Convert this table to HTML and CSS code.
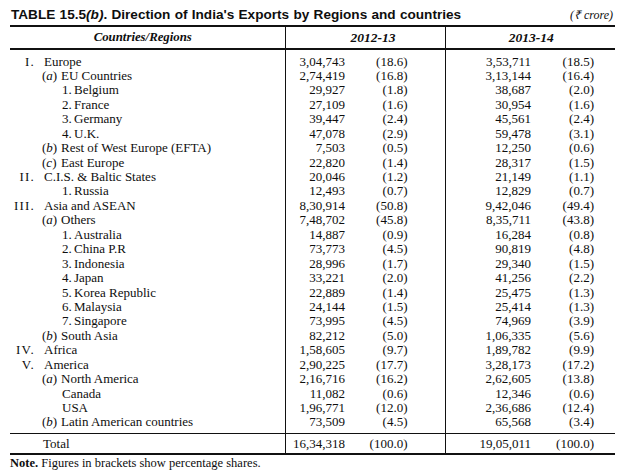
FILE: index.html
```html
<!DOCTYPE html>
<html>
<head>
<meta charset="utf-8">
<link rel="stylesheet" href="styles.css">
</head>
<body>
<div class="page">
  <div class="title-row">
    <h1 class="title">TABLE 15.5<i>(b)</i>. Direction of India's Exports by Regions and countries</h1>
    <span class="unit">(₹ crore)</span>
  </div>
  <table class="data">
    <colgroup>
      <col class="c-lbl"><col class="c-2a"><col class="c-2b"><col class="c-3a"><col class="c-3b">
    </colgroup>
    <thead>
      <tr>
        <th class="h-lbl">Countries/Regions</th>
        <th class="h-y1" colspan="2">2012-13</th>
        <th class="h-y2" colspan="2">2013-14</th>
      </tr>
    </thead>
    <tbody>
      <tr class="first"><td class="lbl l0"><span class="ix">I.</span>Europe</td><td class="n">3,04,743</td><td class="p">(18.6)</td><td class="n">3,53,711</td><td class="p">(18.5)</td></tr>
      <tr><td class="lbl l1"><span class="ix">(<i>a</i>)</span>EU Countries</td><td class="n">2,74,419</td><td class="p">(16.8)</td><td class="n">3,13,144</td><td class="p">(16.4)</td></tr>
      <tr><td class="lbl l2"><span class="ix">1.</span>Belgium</td><td class="n">29,927</td><td class="p">(1.8)</td><td class="n">38,687</td><td class="p">(2.0)</td></tr>
      <tr><td class="lbl l2"><span class="ix">2.</span>France</td><td class="n">27,109</td><td class="p">(1.6)</td><td class="n">30,954</td><td class="p">(1.6)</td></tr>
      <tr><td class="lbl l2"><span class="ix">3.</span>Germany</td><td class="n">39,447</td><td class="p">(2.4)</td><td class="n">45,561</td><td class="p">(2.4)</td></tr>
      <tr><td class="lbl l2"><span class="ix">4.</span>U.K.</td><td class="n">47,078</td><td class="p">(2.9)</td><td class="n">59,478</td><td class="p">(3.1)</td></tr>
      <tr><td class="lbl l1"><span class="ix">(<i>b</i>)</span>Rest of West Europe (EFTA)</td><td class="n">7,503</td><td class="p">(0.5)</td><td class="n">12,250</td><td class="p">(0.6)</td></tr>
      <tr><td class="lbl l1"><span class="ix">(<i>c</i>)</span>East Europe</td><td class="n">22,820</td><td class="p">(1.4)</td><td class="n">28,317</td><td class="p">(1.5)</td></tr>
      <tr><td class="lbl l0"><span class="ix">II.</span>C.I.S. &amp; Baltic States</td><td class="n">20,046</td><td class="p">(1.2)</td><td class="n">21,149</td><td class="p">(1.1)</td></tr>
      <tr><td class="lbl l2"><span class="ix">1.</span>Russia</td><td class="n">12,493</td><td class="p">(0.7)</td><td class="n">12,829</td><td class="p">(0.7)</td></tr>
      <tr><td class="lbl l0"><span class="ix">III.</span>Asia and ASEAN</td><td class="n">8,30,914</td><td class="p">(50.8)</td><td class="n">9,42,046</td><td class="p">(49.4)</td></tr>
      <tr><td class="lbl l1"><span class="ix">(<i>a</i>)</span>Others</td><td class="n">7,48,702</td><td class="p">(45.8)</td><td class="n">8,35,711</td><td class="p">(43.8)</td></tr>
      <tr><td class="lbl l2"><span class="ix">1.</span>Australia</td><td class="n">14,887</td><td class="p">(0.9)</td><td class="n">16,284</td><td class="p">(0.8)</td></tr>
      <tr><td class="lbl l2"><span class="ix">2.</span>China P.R</td><td class="n">73,773</td><td class="p">(4.5)</td><td class="n">90,819</td><td class="p">(4.8)</td></tr>
      <tr><td class="lbl l2"><span class="ix">3.</span>Indonesia</td><td class="n">28,996</td><td class="p">(1.7)</td><td class="n">29,340</td><td class="p">(1.5)</td></tr>
      <tr><td class="lbl l2"><span class="ix">4.</span>Japan</td><td class="n">33,221</td><td class="p">(2.0)</td><td class="n">41,256</td><td class="p">(2.2)</td></tr>
      <tr><td class="lbl l2"><span class="ix">5.</span>Korea Republic</td><td class="n">22,889</td><td class="p">(1.4)</td><td class="n">25,475</td><td class="p">(1.3)</td></tr>
      <tr><td class="lbl l2"><span class="ix">6.</span>Malaysia</td><td class="n">24,144</td><td class="p">(1.5)</td><td class="n">25,414</td><td class="p">(1.3)</td></tr>
      <tr><td class="lbl l2"><span class="ix">7.</span>Singapore</td><td class="n">73,995</td><td class="p">(4.5)</td><td class="n">74,969</td><td class="p">(3.9)</td></tr>
      <tr><td class="lbl l1"><span class="ix">(<i>b</i>)</span>South Asia</td><td class="n">82,212</td><td class="p">(5.0)</td><td class="n">1,06,335</td><td class="p">(5.6)</td></tr>
      <tr><td class="lbl l0"><span class="ix">IV.</span>Africa</td><td class="n">1,58,605</td><td class="p">(9.7)</td><td class="n">1,89,782</td><td class="p">(9.9)</td></tr>
      <tr><td class="lbl l0"><span class="ix">V.</span>America</td><td class="n">2,90,225</td><td class="p">(17.7)</td><td class="n">3,28,173</td><td class="p">(17.2)</td></tr>
      <tr><td class="lbl l1"><span class="ix">(<i>a</i>)</span>North America</td><td class="n">2,16,716</td><td class="p">(16.2)</td><td class="n">2,62,605</td><td class="p">(13.8)</td></tr>
      <tr><td class="lbl l3">Canada</td><td class="n">11,082</td><td class="p">(0.6)</td><td class="n">12,346</td><td class="p">(0.6)</td></tr>
      <tr><td class="lbl l3">USA</td><td class="n">1,96,771</td><td class="p">(12.0)</td><td class="n">2,36,686</td><td class="p">(12.4)</td></tr>
      <tr class="last"><td class="lbl l1"><span class="ix">(<i>b</i>)</span>Latin American countries</td><td class="n">73,509</td><td class="p">(4.5)</td><td class="n">65,568</td><td class="p">(3.4)</td></tr>
    </tbody>
    <tfoot>
      <tr class="total"><td class="lbl lt">Total</td><td class="n">16,34,318</td><td class="p">(100.0)</td><td class="n">19,05,011</td><td class="p">(100.0)</td></tr>
    </tfoot>
  </table>
  <p class="note"><b>Note.</b> Figures in brackets show percentage shares.</p>
</div>
</body>
</html>
```
FILE: styles.css
```css
html, body {
  margin: 0;
  padding: 0;
  background: #fff;
  color: #0e0e0e;
}

.page {
  width: 605px;
  padding: 6px 0 0 10px;
  font-family: "Liberation Serif", "Times New Roman", serif;
}

.title-row {
  display: flex;
  justify-content: space-between;
  align-items: baseline;
  height: 19px;
}

.title {
  margin: 0 0 0 1px;
  font-family: "Liberation Sans", Arial, sans-serif;
  font-weight: bold;
  font-size: 13.6px;
  line-height: 17px;
  word-spacing: 0.5px;
}

.unit {
  font-style: italic;
  font-size: 12px;
  margin-right: 2px;
}

.data {
  border-collapse: collapse;
  table-layout: fixed;
  width: 605px;
  font-size: 13px;
  border-top: 2px solid #111;
  border-bottom: 2px solid #111;
}

.c-lbl { width: 275px; }
.c-2a { width: 60px; }
.c-2b { width: 100px; }
.c-3a { width: 86px; }
.c-3b { width: 84px; }

th {
  font-weight: bold;
  font-style: italic;
  height: 21px;
  line-height: 21px;
  padding: 0;
  text-align: center;
  border-bottom: 2px solid #111;
}

.h-lbl { padding-right: 9px; font-size: 12.8px; }
.h-y1 { padding-left: 16px; border-left: 1px solid #111; font-size: 13.5px; }
.h-y2 { padding-left: 2px; border-left: 1px solid #111; font-size: 13.5px; }

td {
  padding: 0;
  line-height: 14.44px;
  white-space: nowrap;
}

.first td { padding-top: 4.5px; }
.last td { padding-bottom: 3.5px; }

.n {
  text-align: right;
  border-left: 1px solid #111;
}
td.p { text-align: right; }
tr td:nth-child(3) { padding-right: 37px; }
tr td:nth-child(5) { padding-right: 21px; }

.lbl .ix { display: inline-block; }
.l0 { padding-left: 0; }
.l0 .ix { width: 25px; text-align: right; margin-right: 9px; letter-spacing: 1.2px; }
.l1 { padding-left: 32px; }
.l1 .ix { width: 19px; }
.l2 { padding-left: 52px; }
.l2 .ix { width: 12px; }
.l3 { padding-left: 52px; }
.lt { padding-left: 33px; }

.total td {
  border-top: 1px solid #111;
  line-height: 19px;
}

.note {
  margin: 1px 0 0 0;
  font-size: 12.5px;
  line-height: 14px;
}
```
